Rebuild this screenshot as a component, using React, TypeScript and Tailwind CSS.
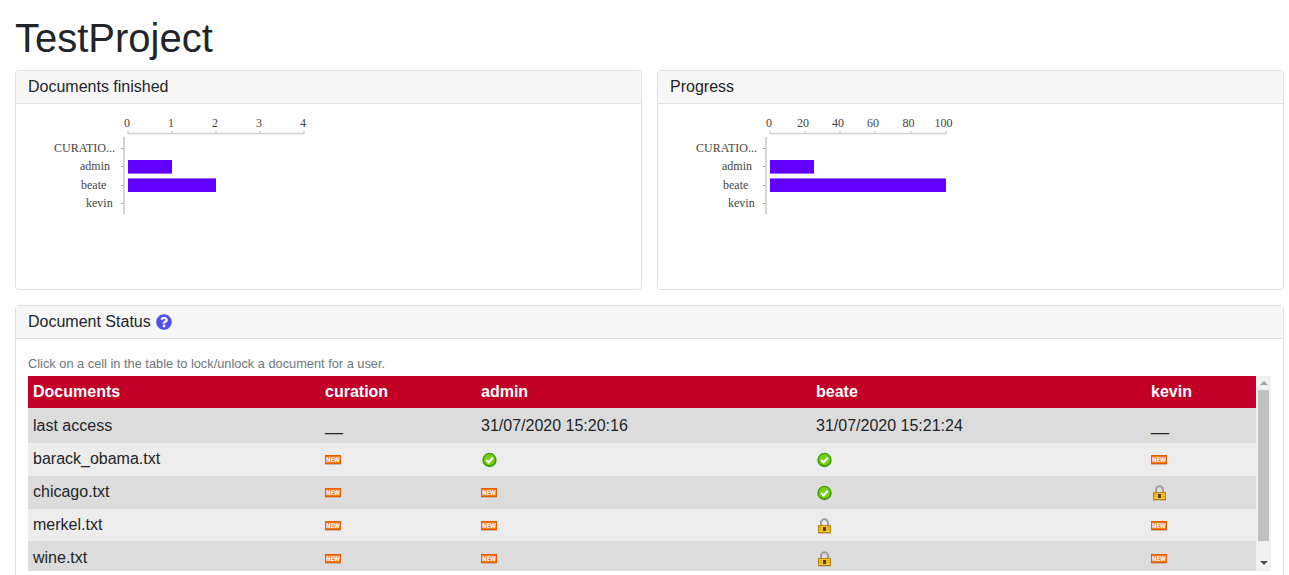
import type { ReactNode } from 'react';
import { FaQuestionCircle } from 'react-icons/fa';

type Status = 'new' | 'done' | 'locked';

const users = [
  { name: 'CURATIO...', x: 38, y: 48 },
  { name: 'admin', x: 64, y: 66 },
  { name: 'beate', x: 65, y: 85 },
  { name: 'kevin', x: 70, y: 103 },
];

const docs: { name: string; row: string; nameCell: string; iconCell: string; cells: Status[] }[] = [
  { name: 'barack_obama.txt', row: 'h-[33px] bg-[#ececec]', nameCell: 'pb-[2px]', iconCell: '', cells: ['new', 'done', 'done', 'new'] },
  { name: 'chicago.txt', row: 'h-[33px] bg-[#dcdcdc]', nameCell: 'pb-[2px]', iconCell: '', cells: ['new', 'new', 'done', 'locked'] },
  { name: 'merkel.txt', row: 'h-[32px] bg-[#ececec]', nameCell: '', iconCell: 'pt-[2px]', cells: ['new', 'new', 'locked', 'new'] },
  { name: 'wine.txt', row: 'h-[33px] bg-[#dcdcdc]', nameCell: '', iconCell: 'pt-[2px]', cells: ['new', 'new', 'locked', 'new'] },
];

function Chart({ ticks, labelX, labels, bars }: { ticks: number[]; labelX: number[]; labels: string[]; bars: number[] }) {
  return (
    <svg width="400" height="186" className="block bg-white">
      <line x1="112" y1="29.5" x2="288" y2="29.5" stroke="#d4d4d4" strokeWidth="1.5" />
      {ticks.map((x, i) => (
        <g key={x}>
          <line x1={x} y1="27" x2={x} y2="30" stroke="#bbb" />
          <text x={labelX[i]} y="23" textAnchor="middle" fontFamily="'Liberation Serif', serif" fontSize="12" fill="#444">
            {labels[i]}
          </text>
        </g>
      ))}
      <line x1="108" y1="33" x2="108" y2="110" stroke="#d4d4d4" strokeWidth="2" />
      {users.map((u) => (
        <g key={u.name}>
          <line x1="105" y1={u.y - 3.5} x2="107" y2={u.y - 3.5} stroke="#999" />
          <text x={u.x} y={u.y} fontFamily="'Liberation Serif', serif" fontSize="12" fill="#444">
            {u.name}
          </text>
        </g>
      ))}
      {bars.map((w, i) => (
        <g key={i}>
          <rect x="112" y={56 + i * 18} width={w} height="14" fill="#9a66ff" />
          <rect x="112" y={56 + i * 18 + (i === 0 ? 0 : 1)} width={w} height="13" fill="#6200ff" />
        </g>
      ))}
    </svg>
  );
}

function NewIcon() {
  return (
    <svg width="16" height="16" viewBox="0 0 16 16" className="block overflow-visible">
      <rect x="0" y="3" width="16" height="9" fill="#e85a00" />
      <rect x="0" y="12" width="16" height="1" fill="#c9b9ad" />
      <rect x="1" y="4" width="14" height="7" fill="#f47a0a" />
      <text x="8" y="10" textAnchor="middle" fontFamily="'DejaVu Sans', sans-serif" fontSize="6.5" fontWeight="700" fill="#fff" textLength="14" lengthAdjust="spacingAndGlyphs">
        NEW
      </text>
    </svg>
  );
}

function DoneIcon() {
  return (
    <svg width="16" height="16" viewBox="0 0 16 16" className="block">
      <circle cx="8.5" cy="8" r="7.2" fill="#3f9e08" />
      <circle cx="8.5" cy="7.6" r="5.6" fill="#74d012" />
      <path d="M5.2 8 L7.6 10.4 L11.8 5.8" fill="none" stroke="#fff" strokeWidth="2.2" />
    </svg>
  );
}

function LockIcon() {
  return (
    <svg width="16" height="16" viewBox="0 0 16 16" className="block">
      <path d="M5 8 V4.5 a3.5 3.2 0 0 1 7 0 V8" fill="none" stroke="#a0a0a0" strokeWidth="2" />
      <rect x="2" y="7" width="13" height="8" fill="#b9820c" />
      <rect x="3" y="8" width="11" height="6" fill="#f5c63c" />
      <rect x="3" y="9" width="3" height="1" fill="#d8a420" />
      <rect x="3" y="11" width="3" height="1" fill="#d8a420" />
      <rect x="11" y="9" width="3" height="1" fill="#d8a420" />
      <rect x="11" y="11" width="3" height="1" fill="#d8a420" />
      <rect x="7" y="9" width="3" height="4" fill="#5e3f06" />
      <rect x="2" y="15" width="13" height="1" fill="#c4c0b8" />
    </svg>
  );
}

function StatusIcon({ status }: { status: Status }) {
  if (status === 'new') return <NewIcon />;
  if (status === 'done') return <DoneIcon />;
  return <LockIcon />;
}

function Panel({ title, chart }: { title: string; chart: ReactNode }) {
  return (
    <div className="flex-1 h-[220px] border border-[#dfdfdf] rounded overflow-hidden">
      <div className="h-[33px] px-3 leading-[31px] bg-[#f7f7f7] border-b border-[#dfdfdf]">{title}</div>
      {chart}
    </div>
  );
}

export default function App() {
  return (
    <div className="h-[575px] overflow-hidden bg-white pl-[15px] pr-[5px] text-[#212529] font-['Liberation_Sans',sans-serif]">
      <h1 className="text-[40px] leading-[48px] h-[70px] pt-[14px] font-normal">TestProject</h1>

      <div className="flex gap-[15px]">
        <Panel
          title="Documents finished"
          chart={<Chart ticks={[112, 156, 200, 244, 288]} labelX={[111, 155, 199, 243, 287]} labels={['0', '1', '2', '3', '4']} bars={[44, 88]} />}
        />
        <Panel
          title="Progress"
          chart={<Chart ticks={[112, 147, 182, 217, 253, 288]} labelX={[111, 145, 180, 215, 250.5, 285.5]} labels={['0', '20', '40', '60', '80', '100']} bars={[44, 176]} />}
        />
      </div>

      <div className="mt-[15px] h-[300px] border border-[#dfdfdf] rounded-t">
        <div className="h-[33px] px-3 pb-px bg-[#f7f7f7] border-b border-[#dfdfdf] flex items-center gap-[5px]">
          Document Status
          <FaQuestionCircle className="w-4 h-4 text-[#5050f0]" />
        </div>
        <div className="pl-3 pt-4">
          <p className="text-[12.8px] leading-[18px] h-[21px] text-[#6c757d]">
            Click on a cell in the table to lock/unlock a document for a user.
          </p>
          <div className="flex h-[195px] w-[1243px]">
            <div className="w-[1228px] overflow-hidden">
              <table className="w-[1228px] table-fixed border-collapse">
                <colgroup>
                  <col className="w-[292px]" />
                  <col className="w-[156px]" />
                  <col className="w-[335px]" />
                  <col className="w-[335px]" />
                  <col />
                </colgroup>
                <thead>
                  <tr className="h-8 bg-[#c20027] text-white text-left">
                    {['Documents', 'curation', 'admin', 'beate', 'kevin'].map((h) => (
                      <th key={h} className="px-[5px] font-bold">{h}</th>
                    ))}
                  </tr>
                </thead>
                <tbody>
                  <tr className="h-[35px] bg-[#dcdcdc]">
                    <td className="px-[5px]">last access</td>
                    <td className="px-[5px]">__</td>
                    <td className="px-[5px]">31/07/2020 15:20:16</td>
                    <td className="px-[5px]">31/07/2020 15:21:24</td>
                    <td className="px-[5px]">__</td>
                  </tr>
                  {docs.map((d) => (
                    <tr key={d.name} className={d.row}>
                      <td className={`px-[5px] ${d.nameCell}`}>{d.name}</td>
                      {d.cells.map((c, j) => (
                        <td key={j} className={`px-[5px] ${d.iconCell}`}>
                          <StatusIcon status={c} />
                        </td>
                      ))}
                    </tr>
                  ))}
                </tbody>
              </table>
            </div>
            <div className="w-[15px] bg-[#f0f0f0] flex flex-col items-center">
              <div className="h-[14px] flex items-center justify-center text-[#a3a3a3]">
                <div className="w-0 h-0 border-x-[4px] border-x-transparent border-b-[4px] border-b-current" />
              </div>
              <div className="w-[11px] h-[151px] bg-[#c1c1c1]" />
              <div className="flex-1 flex items-end justify-center pb-[6px] text-[#505050]">
                <div className="w-0 h-0 border-x-[4px] border-x-transparent border-t-[4px] border-t-current" />
              </div>
            </div>
          </div>
        </div>
      </div>
    </div>
  );
}
